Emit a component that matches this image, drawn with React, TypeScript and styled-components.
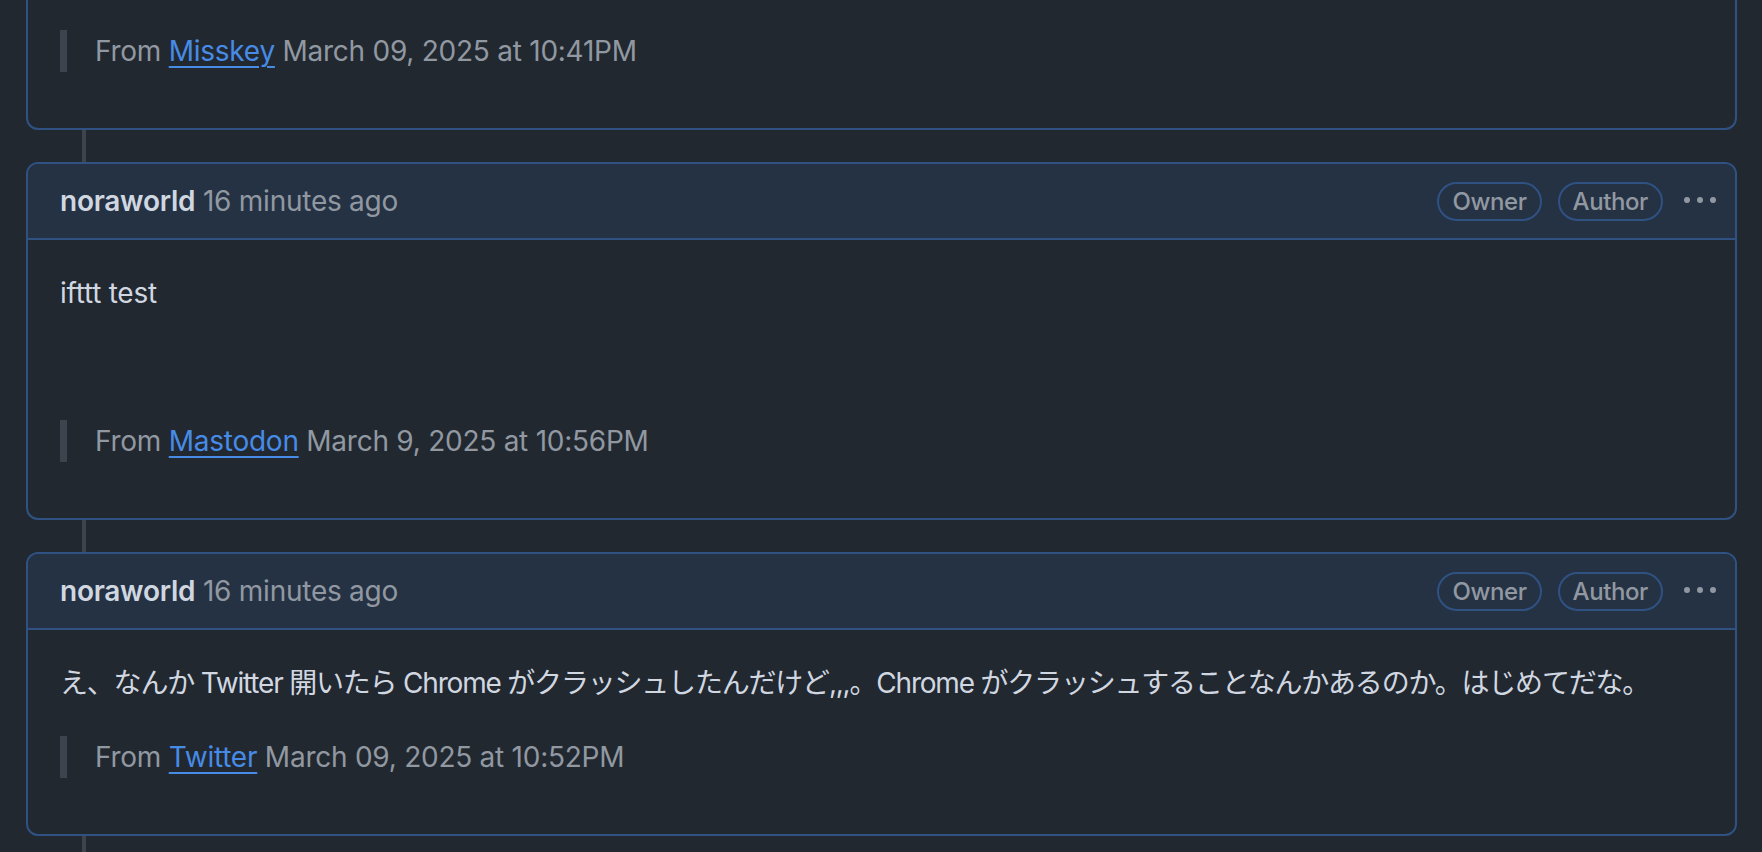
import React from 'react'
import styled, { createGlobalStyle } from 'styled-components'

const GlobalStyle = createGlobalStyle`
  html, body {
    margin: 0;
    padding: 0;
    background: #212830;
    overflow: hidden;
  }
  body {
    font-family: Inter, "Noto Sans CJK JP", sans-serif;
    color: #d1d7e0;
    letter-spacing: -0.25px;
  }
`

type Comment = {
  id: number
  author?: string
  time?: string
  lang?: string
  paragraphs: string[]
  blankLine?: boolean
  source: string
  date: string
}

const comments: Comment[] = [
  {
    id: 1,
    paragraphs: [],
    source: 'Misskey',
    date: 'March 09, 2025 at 10:41PM',
  },
  {
    id: 2,
    author: 'noraworld',
    time: '16 minutes ago',
    paragraphs: ['ifttt test'],
    blankLine: true,
    source: 'Mastodon',
    date: 'March 9, 2025 at 10:56PM',
  },
  {
    id: 3,
    author: 'noraworld',
    time: '16 minutes ago',
    lang: 'ja',
    paragraphs: [
      'え、なんか Twitter 開いたら Chrome がクラッシュしたんだけど,,,。Chrome がクラッシュすることなんかあるのか。はじめてだな。',
    ],
    source: 'Twitter',
    date: 'March 09, 2025 at 10:52PM',
  },
]

const KebabIcon: React.FC = () => (
  <svg width="32" height="32" viewBox="0 0 16 16" fill="#9198a1" aria-hidden>
    <path d="M8 9a1.5 1.5 0 1 0 0-3 1.5 1.5 0 0 0 0 3ZM1.5 9a1.5 1.5 0 1 0 0-3 1.5 1.5 0 0 0 0 3Zm13 0a1.5 1.5 0 1 0 0-3 1.5 1.5 0 0 0 0 3Z" />
  </svg>
)

const CommentCard: React.FC<{ comment: Comment }> = ({ comment }) => (
  <StyledCard $cut={!comment.author}>
    {comment.author && (
      <StyledHeader>
        <StyledMeta>
          <StyledAuthor>{comment.author}</StyledAuthor> {comment.time}
        </StyledMeta>
        <StyledActions>
          <StyledLabel>Owner</StyledLabel>
          <StyledLabel>Author</StyledLabel>
          <StyledKebab type="button" aria-label="Show options">
            <KebabIcon />
          </StyledKebab>
        </StyledActions>
      </StyledHeader>
    )}
    <StyledBody>
      {comment.paragraphs.map((text) => (
        <StyledParagraph key={text} lang={comment.lang}>
          {text}
        </StyledParagraph>
      ))}
      {comment.blankLine && <StyledParagraph>{'\u00a0'}</StyledParagraph>}
      <StyledQuote>
        From <StyledLink href="#">{comment.source}</StyledLink> {comment.date}
      </StyledQuote>
    </StyledBody>
  </StyledCard>
)

const App: React.FC = () => (
  <>
    <GlobalStyle />
    <StyledTimeline>
      {comments.map((comment) => (
        <React.Fragment key={comment.id}>
          <CommentCard comment={comment} />
          <StyledConnector />
        </React.Fragment>
      ))}
    </StyledTimeline>
  </>
)

const StyledTimeline = styled.div`
  display: flex;
  flex-direction: column;
  margin-top: -2px;
  padding: 0 25px 0 26px;
`

const StyledConnector = styled.div`
  width: 4px;
  height: 32px;
  margin-left: 56px;
  background: #3d444d;
`

const StyledCard = styled.div<{ $cut?: boolean }>`
  border: 2px solid #2f5283;
  border-radius: 12px;
  overflow: hidden;
  ${({ $cut }) =>
    $cut &&
    `
    border-top: none;
    border-top-left-radius: 0;
    border-top-right-radius: 0;
  `}
`

const StyledHeader = styled.div`
  display: flex;
  align-items: center;
  justify-content: space-between;
  height: 74px;
  padding: 0 19px 0 32px;
  background: #243244;
  border-bottom: 2px solid #2f5283;
`

const StyledMeta = styled.div`
  font-size: 28px;
  line-height: 42px;
  color: #9198a1;
`

const StyledAuthor = styled.span`
  font-weight: 600;
  color: #d1d7e0;
`

const StyledActions = styled.div`
  display: flex;
  align-items: center;
  gap: 16px;
`

const StyledLabel = styled.span`
  display: inline-flex;
  align-items: center;
  height: 39px;
  box-sizing: border-box;
  padding: 0 13px;
  border: 2px solid #2f5283;
  border-radius: 999px;
  font-size: 24px;
  font-weight: 500;
  letter-spacing: -0.4px;
  color: #9198a1;
`

const StyledKebab = styled.button`
  display: flex;
  align-items: center;
  padding: 0;
  margin-left: 5px;
  border: none;
  background: none;
  cursor: pointer;
`

const StyledBody = styled.div`
  padding: 32px 32px 56px;
  font-size: 28px;
  line-height: 42px;
`

const StyledParagraph = styled.p`
  margin: 0 0 32px;
  color: #d1d7e0;

  &:lang(ja) {
    letter-spacing: -1.2px;
  }
`

const StyledQuote = styled.blockquote`
  margin: 0;
  padding: 0 28px;
  border-left: 7px solid #3d444d;
  color: #9198a1;
`

const StyledLink = styled.a`
  color: #478be6;
  text-decoration: underline;
  text-decoration-thickness: 2px;
  text-underline-offset: 5px;
`

export default App
